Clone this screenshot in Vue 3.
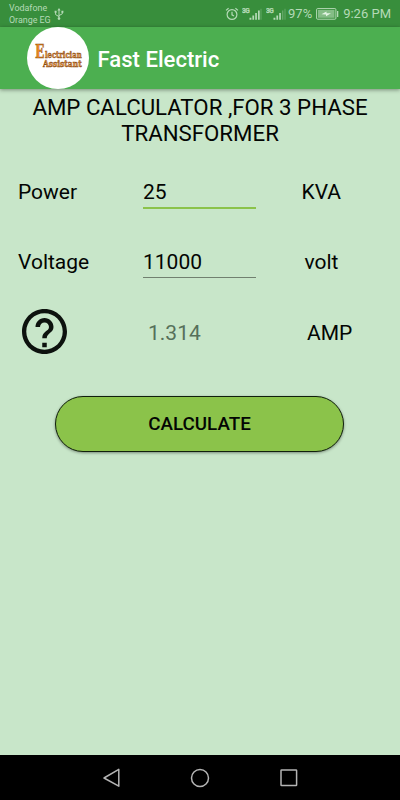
<script setup>
import { ref } from 'vue'

const power = ref('25')
const voltage = ref('11000')
const result = ref('1.314')

function calculate() {
  const amps = (Number(power.value) * 1000) / (Math.sqrt(3) * Number(voltage.value))
  result.value = amps.toFixed(3)
}
</script>

<template>
  <div class="screen">
    <header class="status">
      <div class="carriers">
        <span>Vodafone</span>
        <span>Orange EG</span>
      </div>
      <svg class="usb" viewBox="0 0 10 14" width="10" height="14">
        <path d="M5 3v8M5 9.6L1.6 7.6V5M5 8.6l3.3-1.8V5" fill="none" stroke="currentColor" stroke-width="1" />
        <path d="M5 1L3.4 3.6h3.2zM.6 3.8h2v2h-2zM7.4 3.8h2v2h-2z" fill="currentColor" />
        <circle cx="5" cy="11.6" r="1.3" fill="currentColor" />
      </svg>
      <div class="indicators">
        <svg class="alarm" viewBox="0 0 14 14" width="14" height="14">
          <g fill="none" stroke="currentColor" stroke-width="1.2">
            <circle cx="7" cy="7.5" r="4.9" />
            <path d="M1 3.4L3.6 1.2M13 3.4L10.4 1.2M7 4.8v3l2 1.2" />
          </g>
        </svg>
        <svg class="signal first" viewBox="0 0 20 14" width="20" height="14">
          <text x="0" y="5.6">3G</text>
          <path d="M7.5 10.7h1.9v2H7.5zM10.4 8.6h1.7v4.1h-1.7zM13.2 6h1.7v6.7h-1.7zM16 3.5h1.7v9.2H16z" fill="currentColor" />
          <path d="M18.5 1.8h1v10.9h-1z" fill="currentColor" opacity=".35" />
        </svg>
        <svg class="signal second" viewBox="0 0 20 14" width="20" height="14">
          <text x="0" y="5.6">3G</text>
          <path d="M7.5 10.7h1.9v2H7.5zM10.4 8.6h1.7v4.1h-1.7zM13.2 6h1.7v6.7h-1.7z" fill="currentColor" />
          <path d="M16 3.5h1.4v9.2H16zM18.5 1.8h1v10.9h-1z" fill="currentColor" opacity=".35" />
        </svg>
        <span class="percent">97%</span>
        <svg class="battery" viewBox="0 0 23 12" width="23" height="12">
          <rect x=".6" y=".6" width="19.3" height="10.6" rx="1" fill="none" stroke="currentColor" stroke-width="1" />
          <rect x="2" y="2" width="16.5" height="7.8" fill="currentColor" opacity=".62" />
          <path d="M21 3h1.3v6H21z" fill="currentColor" />
          <path d="M5.5 6.3l5-2.8v1.7h4.5l-5 3V6.6z" fill="#e4f5e5" />
        </svg>
        <span class="clock">9:26 PM</span>
      </div>
    </header>

    <div class="appbar">
      <div class="logo">
        <svg viewBox="0 0 62 62" width="62" height="62">
          <g class="logo-text">
            <text class="logo-cap" x="8" y="30.6" textLength="9.4" lengthAdjust="spacingAndGlyphs">E</text>
            <text x="18" y="31.2" textLength="36.6" lengthAdjust="spacingAndGlyphs">lectrician</text>
            <text x="16" y="40" textLength="38.6" lengthAdjust="spacingAndGlyphs">Assistant</text>
          </g>
        </svg>
      </div>
      <h1>Fast Electric</h1>
    </div>

    <main>
      <h2>
        <span class="line-one">AMP CALCULATOR ,FOR 3 PHASE</span>
        <span class="line-two">TRANSFORMER</span>
      </h2>

      <div class="row power">
        <label for="power">Power</label>
        <input id="power" v-model="power" class="active" />
        <span class="unit">KVA</span>
      </div>
      <div class="row voltage">
        <label for="voltage">Voltage</label>
        <input id="voltage" v-model="voltage" />
        <span class="unit">volt</span>
      </div>
      <div class="row result">
        <svg class="help" viewBox="2 2 20 20" width="45" height="45">
          <path d="M11 17h2v2h-2v-2zm1-15C6.48 2 2 6.48 2 12s4.48 10 10 10 10-4.48 10-10S17.52 2 12 2zm0 18.1c-4.47 0-8.1-3.63-8.1-8.1S7.53 3.9 12 3.9s8.1 3.63 8.1 8.1-3.63 8.1-8.1 8.1zM12 6c-2.21 0-4 1.79-4 4h2c0-1.1.9-2 2-2s2 .9 2 2c0 2-3 1.75-3 5h2c0-2.25 3-2.5 3-5 0-2.21-1.79-4-4-4z" fill="#0d120e" />
        </svg>
        <output>{{ result }}</output>
        <span class="unit">AMP</span>
      </div>

      <button type="button" @click="calculate">CALCULATE</button>
    </main>

    <nav>
      <svg viewBox="0 0 20 20" width="20" height="20"><path d="M17.8 1.4v16.8L3 10z" /></svg>
      <svg viewBox="0 0 20 20" width="20" height="20"><circle cx="10" cy="10" r="8.5" /></svg>
      <svg viewBox="0 0 20 20" width="20" height="20"><rect x="2" y="2" width="15.6" height="15.6" rx=".6" /></svg>
    </nav>
  </div>
</template>

<style>
body {
  background: #c8e6c9;
}
</style>

<style scoped>
.screen {
  box-sizing: border-box;
  display: flex;
  flex-direction: column;
  width: 400px;
  height: 800px;
  overflow: hidden;
  background: #c8e6c9;
  color: #030503;
  font-family: Roboto, sans-serif;
}
.status {
  display: flex;
  flex: none;
  height: 27px;
  padding-left: 9px;
  background: #388e3c;
  color: #b5dab7;
}
.carriers {
  display: flex;
  flex-direction: column;
  width: 45px;
  padding-top: 1.5px;
  font-size: 8.9px;
  line-height: 12px;
  white-space: nowrap;
}
.usb {
  margin-top: 7px;
}
.indicators {
  display: flex;
  flex: 1;
  align-items: center;
  justify-content: flex-end;
  padding-right: 9px;
}
.signal {
  margin-left: 4px;
}
.alarm {
  margin-right: -1px;
}
.signal text {
  fill: currentColor;
  stroke: currentColor;
  stroke-width: 0.25px;
  font-size: 6.6px;
  font-weight: 700;
  letter-spacing: -0.5px;
}
.percent {
  margin-left: 2px;
  font-size: 13px;
}
.battery {
  margin-left: 4px;
}
.clock {
  margin-left: 4px;
  font-size: 13px;
}
.appbar {
  z-index: 1;
  display: flex;
  flex: none;
  align-items: center;
  height: 62px;
  padding-left: 27px;
  background: #4caf50;
  box-shadow: 0 1px 4px rgba(0, 0, 0, 0.4);
}
.logo {
  width: 62px;
  height: 62px;
  border-radius: 50%;
  background: #fff;
}
.logo svg {
  display: block;
  overflow: visible;
}
.logo-text {
  fill: #e8903a;
  stroke: #8a4d14;
  stroke-width: 0.5px;
  font-family: "DejaVu Serif", serif;
  font-size: 8.6px;
  font-weight: 700;
}
.logo-cap {
  fill: #f08a1c;
  font-size: 18px;
}
h1 {
  margin: 1px 0 0 8.5px;
  color: #fff;
  font-size: 22.1px;
  font-weight: 500;
  line-height: 26px;
}
main {
  display: flex;
  flex: 1;
  flex-direction: column;
}
h2 {
  display: flex;
  flex-direction: column;
  align-items: center;
  margin: 5px 0 0;
  font-size: 22.25px;
  font-weight: 400;
  line-height: 26px;
  white-space: nowrap;
}
.row {
  display: grid;
  grid-template-columns: 125px 113px 1fr;
  align-items: center;
  height: 36px;
  padding-left: 18px;
  font-size: 21px;
}
.power {
  margin-top: 28px;
}
.voltage {
  margin-top: 34px;
}
.result {
  height: 46px;
  margin-top: 28px;
}
input {
  box-sizing: border-box;
  align-self: end;
  width: 113px;
  height: 32px;
  margin-bottom: 2px;
  padding: 0;
  border: 0;
  border-bottom: 1px solid #71806f;
  border-radius: 0;
  outline: 0;
  background: transparent;
  color: inherit;
  font: inherit;
}
input.active {
  height: 34px;
  margin-bottom: 1px;
  padding-top: 1px;
  border-bottom: 2px solid #8bc34a;
}
.unit {
  padding-left: 45.5px;
}
.voltage .unit {
  padding-left: 48.5px;
}
.help {
  margin-left: 4px;
}
output {
  padding-top: 3px;
  padding-left: 5px;
  color: #56705a;
}
.result .unit {
  padding-top: 3px;
  padding-left: 51px;
}
button {
  align-self: center;
  width: 289px;
  height: 56px;
  margin-top: 42px;
  margin-right: 1px;
  padding: 0;
  border: 1px solid #10200c;
  border-radius: 28px;
  background: #8bc34a;
  box-shadow: 0 1px 3px rgba(0, 0, 0, 0.4);
  color: #030503;
  font: 500 18.8px Roboto, sans-serif;
}
nav {
  display: flex;
  flex: none;
  align-items: center;
  justify-content: center;
  gap: 69px;
  box-sizing: border-box;
  height: 45px;
  background: #000;
}
nav svg {
  fill: none;
  stroke: #b4b4b4;
  stroke-linejoin: round;
  stroke-width: 1.5;
}
</style>
